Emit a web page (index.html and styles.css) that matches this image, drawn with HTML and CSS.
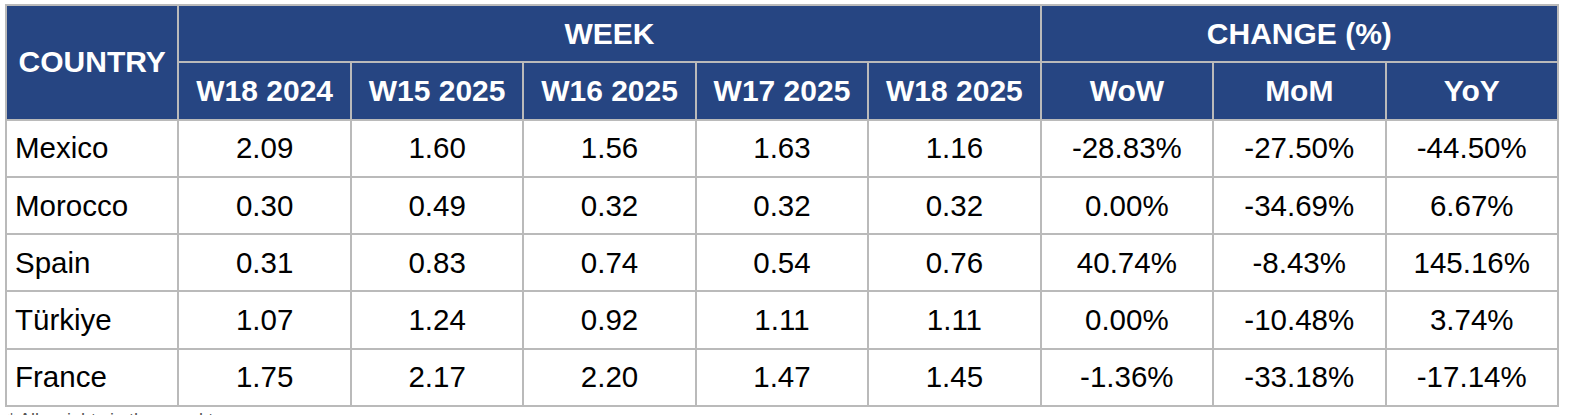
FILE: index.html
```html
<!DOCTYPE html>
<html>
<head>
<meta charset="utf-8">
<link rel="stylesheet" href="styles.css">
</head>
<body>
<div class="page">
<table class="grid">
  <thead>
    <tr>
      <th class="country-h" rowspan="2">COUNTRY</th>
      <th colspan="5">WEEK</th>
      <th colspan="3">CHANGE (%)</th>
    </tr>
    <tr>
      <th>W18 2024</th>
      <th>W15 2025</th>
      <th>W16 2025</th>
      <th>W17 2025</th>
      <th>W18 2025</th>
      <th>WoW</th>
      <th>MoM</th>
      <th>YoY</th>
    </tr>
  </thead>
  <tbody>
    <tr><td class="name">Mexico</td><td>2.09</td><td>1.60</td><td>1.56</td><td>1.63</td><td>1.16</td><td>-28.83%</td><td>-27.50%</td><td>-44.50%</td></tr>
    <tr><td class="name">Morocco</td><td>0.30</td><td>0.49</td><td>0.32</td><td>0.32</td><td>0.32</td><td>0.00%</td><td>-34.69%</td><td>6.67%</td></tr>
    <tr><td class="name">Spain</td><td>0.31</td><td>0.83</td><td>0.74</td><td>0.54</td><td>0.76</td><td>40.74%</td><td>-8.43%</td><td>145.16%</td></tr>
    <tr><td class="name">Türkiye</td><td>1.07</td><td>1.24</td><td>0.92</td><td>1.11</td><td>1.11</td><td>0.00%</td><td>-10.48%</td><td>3.74%</td></tr>
    <tr><td class="name">France</td><td>1.75</td><td>2.17</td><td>2.20</td><td>1.47</td><td>1.45</td><td>-1.36%</td><td>-33.18%</td><td>-17.14%</td></tr>
  </tbody>
</table>
<p class="note">* All weights in thousand tons</p>
</div>
</body>
</html>
```

FILE: styles.css
```css
html, body {
  margin: 0;
  padding: 0;
  background: #ffffff;
}
body {
  font-family: "Liberation Sans", Arial, sans-serif;
  overflow: hidden;
}
.page {
  padding: 4px 5px 0 5px;
}
.grid {
  border-collapse: collapse;
  table-layout: fixed;
  width: 1554px;
}
.grid th,
.grid td {
  border: 2px solid #bababa;
  padding: 0;
  text-align: center;
  vertical-align: middle;
  white-space: nowrap;
}
.grid tr {
  height: 57.3px;
}
.grid th {
  background: #264582;
  color: #ffffff;
  font-weight: bold;
  font-size: 30px;
}
.grid td {
  color: #000000;
  font-size: 29.5px;
}
.grid td.name {
  text-align: left;
  padding-left: 8px;
}
.note {
  margin: 2px 0 0 3px;
  font-size: 18px;
  line-height: 22px;
  color: #555555;
}
```
